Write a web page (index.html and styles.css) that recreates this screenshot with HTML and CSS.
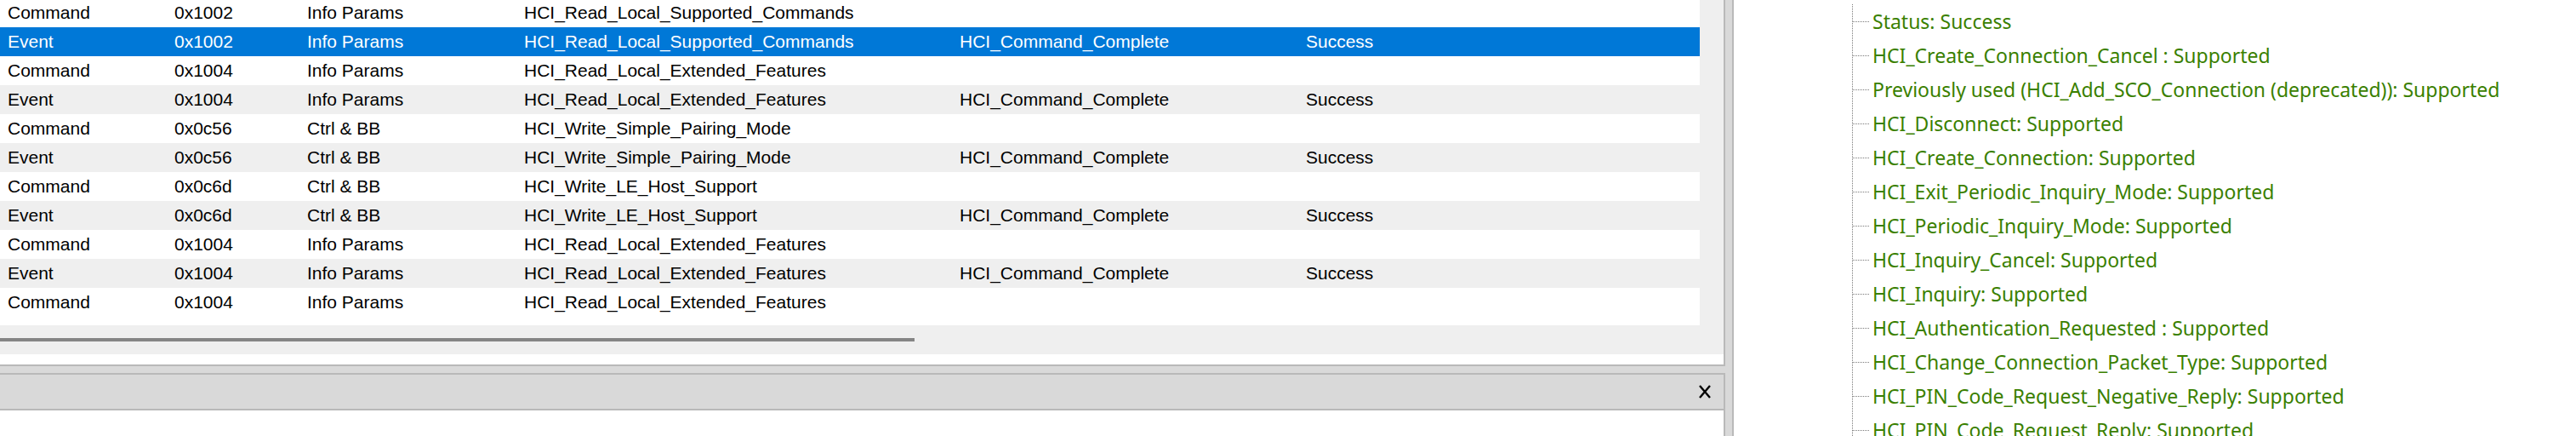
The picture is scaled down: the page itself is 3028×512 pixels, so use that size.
FILE: index.html
```html
<!DOCTYPE html>
<html>
<head>
<meta charset="utf-8">
<link rel="stylesheet" href="styles.css">
</head>
<body>
<div class="app">
  <div class="left">
    <div class="pane pane-top">
      <div class="listwrap">
        <div class="list">
          <div class="row"><span>Command</span><span>0x1002</span><span>Info Params</span><span>HCI_Read_Local_Supported_Commands</span><span></span><span></span></div>
          <div class="row sel"><span>Event</span><span>0x1002</span><span>Info Params</span><span>HCI_Read_Local_Supported_Commands</span><span>HCI_Command_Complete</span><span>Success</span></div>
          <div class="row"><span>Command</span><span>0x1004</span><span>Info Params</span><span>HCI_Read_Local_Extended_Features</span><span></span><span></span></div>
          <div class="row alt"><span>Event</span><span>0x1004</span><span>Info Params</span><span>HCI_Read_Local_Extended_Features</span><span>HCI_Command_Complete</span><span>Success</span></div>
          <div class="row"><span>Command</span><span>0x0c56</span><span>Ctrl &amp; BB</span><span>HCI_Write_Simple_Pairing_Mode</span><span></span><span></span></div>
          <div class="row alt"><span>Event</span><span>0x0c56</span><span>Ctrl &amp; BB</span><span>HCI_Write_Simple_Pairing_Mode</span><span>HCI_Command_Complete</span><span>Success</span></div>
          <div class="row"><span>Command</span><span>0x0c6d</span><span>Ctrl &amp; BB</span><span>HCI_Write_LE_Host_Support</span><span></span><span></span></div>
          <div class="row alt"><span>Event</span><span>0x0c6d</span><span>Ctrl &amp; BB</span><span>HCI_Write_LE_Host_Support</span><span>HCI_Command_Complete</span><span>Success</span></div>
          <div class="row"><span>Command</span><span>0x1004</span><span>Info Params</span><span>HCI_Read_Local_Extended_Features</span><span></span><span></span></div>
          <div class="row alt"><span>Event</span><span>0x1004</span><span>Info Params</span><span>HCI_Read_Local_Extended_Features</span><span>HCI_Command_Complete</span><span>Success</span></div>
          <div class="row"><span>Command</span><span>0x1004</span><span>Info Params</span><span>HCI_Read_Local_Extended_Features</span><span></span><span></span></div>
        </div>
        <div class="vscroll"></div>
      </div>
      <div class="hscroll"><div class="thumb"></div></div>
      <div class="gap"></div>
    </div>
    <div class="hsplit"></div>
    <div class="pane pane-bottom">
      <div class="header">
        <svg class="close" width="16" height="16" viewBox="0 0 16 16"><path d="M2 1 L14 15 M14 1 L2 15" stroke="#000" stroke-width="2.4" fill="none"/></svg>
      </div>
      <div class="body"></div>
    </div>
  </div>
  <div class="vsplit"></div>
  <div class="right">
    <ul class="tree">
      <li>Status: Success</li>
      <li>HCI_Create_Connection_Cancel : Supported</li>
      <li>Previously used (HCI_Add_SCO_Connection (deprecated)): Supported</li>
      <li>HCI_Disconnect: Supported</li>
      <li>HCI_Create_Connection: Supported</li>
      <li>HCI_Exit_Periodic_Inquiry_Mode: Supported</li>
      <li>HCI_Periodic_Inquiry_Mode: Supported</li>
      <li>HCI_Inquiry_Cancel: Supported</li>
      <li>HCI_Inquiry: Supported</li>
      <li>HCI_Authentication_Requested : Supported</li>
      <li>HCI_Change_Connection_Packet_Type: Supported</li>
      <li>HCI_PIN_Code_Request_Negative_Reply: Supported</li>
      <li>HCI_PIN_Code_Request_Reply: Supported</li>
    </ul>
  </div>
</div>
</body>
</html>
```

FILE: styles.css
```css
html, body {
  margin: 0;
  padding: 0;
  background: #ffffff;
}
.app {
  display: flex;
  width: 3028px;
  height: 512px;
  overflow: hidden;
}
.left {
  width: 2028px;
  flex: none;
  display: flex;
  flex-direction: column;
}
.pane {
  border-right: 2px solid #b9b9b9;
  background: #ffffff;
}
.pane-top {
  height: 428px;
  border-bottom: 2px solid #b9b9b9;
  display: flex;
  flex-direction: column;
}
.listwrap {
  display: flex;
  height: 382px;
  overflow: hidden;
}
.list {
  width: 1998px;
  margin-top: -2px;
  font-family: "Liberation Sans", Arial, sans-serif;
  font-size: 21px;
  color: #000000;
}
.row {
  display: grid;
  grid-template-columns: 196px 156px 255px 512px 407px 1fr;
  height: 34px;
  align-items: center;
  padding-left: 9px;
  white-space: nowrap;
}
.row.alt {
  background: #efefef;
}
.row.sel {
  background: #0078d7;
  color: #ffffff;
}
.vscroll {
  width: 28px;
  background: #efefef;
}
.hscroll {
  height: 34px;
  background: #efefef;
  display: flex;
  align-items: center;
}
.thumb {
  width: 1075px;
  height: 4px;
  background: #858585;
}
.gap {
  height: 12px;
}
.hsplit {
  height: 8px;
  background: #d9d9d9;
}
.pane-bottom {
  flex: 1;
}
.header {
  height: 40px;
  background: #d9d9d9;
  border-top: 2px solid #b9b9b9;
  border-bottom: 2px solid #b9b9b9;
  display: flex;
  align-items: center;
  justify-content: flex-end;
  padding-right: 14px;
}
.close {
  display: block;
}
.vsplit {
  width: 8px;
  flex: none;
  background: #d9d9d9;
  border-right: 2px solid #b9b9b9;
}
.right {
  flex: 1;
  background: #ffffff;
}
.tree {
  list-style: none;
  margin: 5px 0 0 139px;
  padding: 0;
  background-image: linear-gradient(to bottom, #7a7a7a 50%, transparent 50%);
  background-size: 1px 2px;
  background-repeat: repeat-y;
  font-family: "Noto Sans", sans-serif;
  font-size: 23px;
  color: #3a8000;
}
.tree li {
  display: flex;
  align-items: center;
  height: 40px;
  white-space: nowrap;
}
.tree li::before {
  content: "";
  width: 20px;
  height: 1px;
  margin-left: 1px;
  margin-right: 3px;
  background-image: linear-gradient(to right, #7a7a7a 50%, transparent 50%);
  background-size: 2px 1px;
}
```
